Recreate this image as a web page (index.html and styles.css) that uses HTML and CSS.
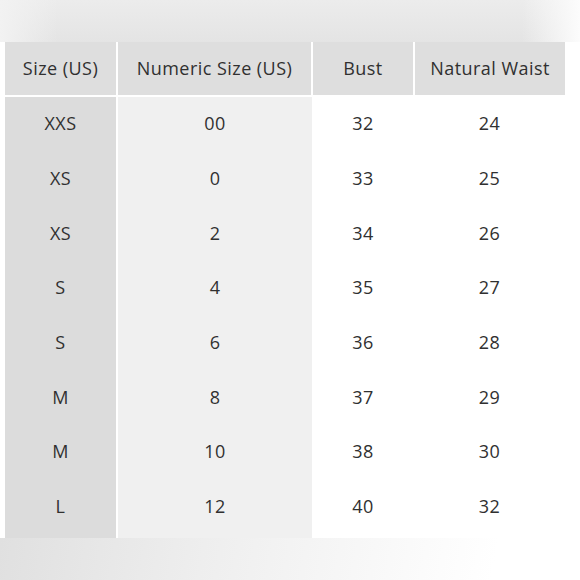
FILE: index.html
```html
<!DOCTYPE html>
<html>
<head>
<meta charset="utf-8">
<link rel="stylesheet" href="styles.css">
</head>
<body>
<div class="band band-top"></div>
<table class="chart">
  <colgroup>
    <col class="c1"><col class="c2"><col class="c3"><col class="c4">
  </colgroup>
  <thead>
    <tr><th>Size (US)</th><th>Numeric Size (US)</th><th>Bust</th><th>Natural Waist</th></tr>
  </thead>
  <tbody>
    <tr><td>XXS</td><td>00</td><td>32</td><td>24</td></tr>
    <tr><td>XS</td><td>0</td><td>33</td><td>25</td></tr>
    <tr><td>XS</td><td>2</td><td>34</td><td>26</td></tr>
    <tr><td>S</td><td>4</td><td>35</td><td>27</td></tr>
    <tr><td>S</td><td>6</td><td>36</td><td>28</td></tr>
    <tr><td>M</td><td>8</td><td>37</td><td>29</td></tr>
    <tr><td>M</td><td>10</td><td>38</td><td>30</td></tr>
    <tr><td>L</td><td>12</td><td>40</td><td>32</td></tr>
  </tbody>
</table>
<div class="band band-bottom"></div>
</body>
</html>
```
FILE: styles.css
```css
html, body {
  margin: 0;
  padding: 0;
  background: #ffffff;
}
body {
  width: 580px;
  height: 580px;
  overflow: hidden;
  font-family: "Open Sans", "Noto Sans", sans-serif;
  color: #303030;
}
.band {
  width: 580px;
}
.band-top {
  height: 42px;
  background:
    linear-gradient(90deg, rgba(242,242,242,1) 0%, rgba(242,242,242,0) 10%, rgba(242,242,242,0) 90%, rgba(252,252,252,1) 100%),
    linear-gradient(180deg, #ececec 0%, #e4e4e4 100%);
}
.band-bottom {
  height: 42px;
  background: linear-gradient(100deg, #e0e0e0 0%, #eeeeee 35%, #fafafa 70%, #ffffff 85%);
}
.chart {
  margin-left: 5px;
  width: 560px;
  border-collapse: collapse;
  table-layout: fixed;
  font-size: 18px;
  letter-spacing: 0.45px;
}
.c1 { width: 112px; }
.c2 { width: 195px; }
.c3 { width: 102px; }
.c4 { width: 151px; }
.chart th {
  height: 51px;
  padding: 0 0 2px;
  font-weight: 400;
  background: #dedede;
  border-right: 2px solid #ffffff;
  border-bottom: 2px solid #ffffff;
  text-align: center;
  vertical-align: middle;
}
.chart th:last-child { border-right: 0; }
.chart td {
  height: 52.7px;
  padding: 0 0 2px;
  text-align: center;
  vertical-align: middle;
}
.chart tbody tr:last-child td {
  padding-bottom: 5px;
}
.chart td:nth-child(1) {
  background: #dcdcdc;
  border-right: 2px solid #ffffff;
}
.chart td:nth-child(2) {
  background: #f0f0f0;
}
.chart td:nth-child(3),
.chart td:nth-child(4) {
  background: #ffffff;
}
```
